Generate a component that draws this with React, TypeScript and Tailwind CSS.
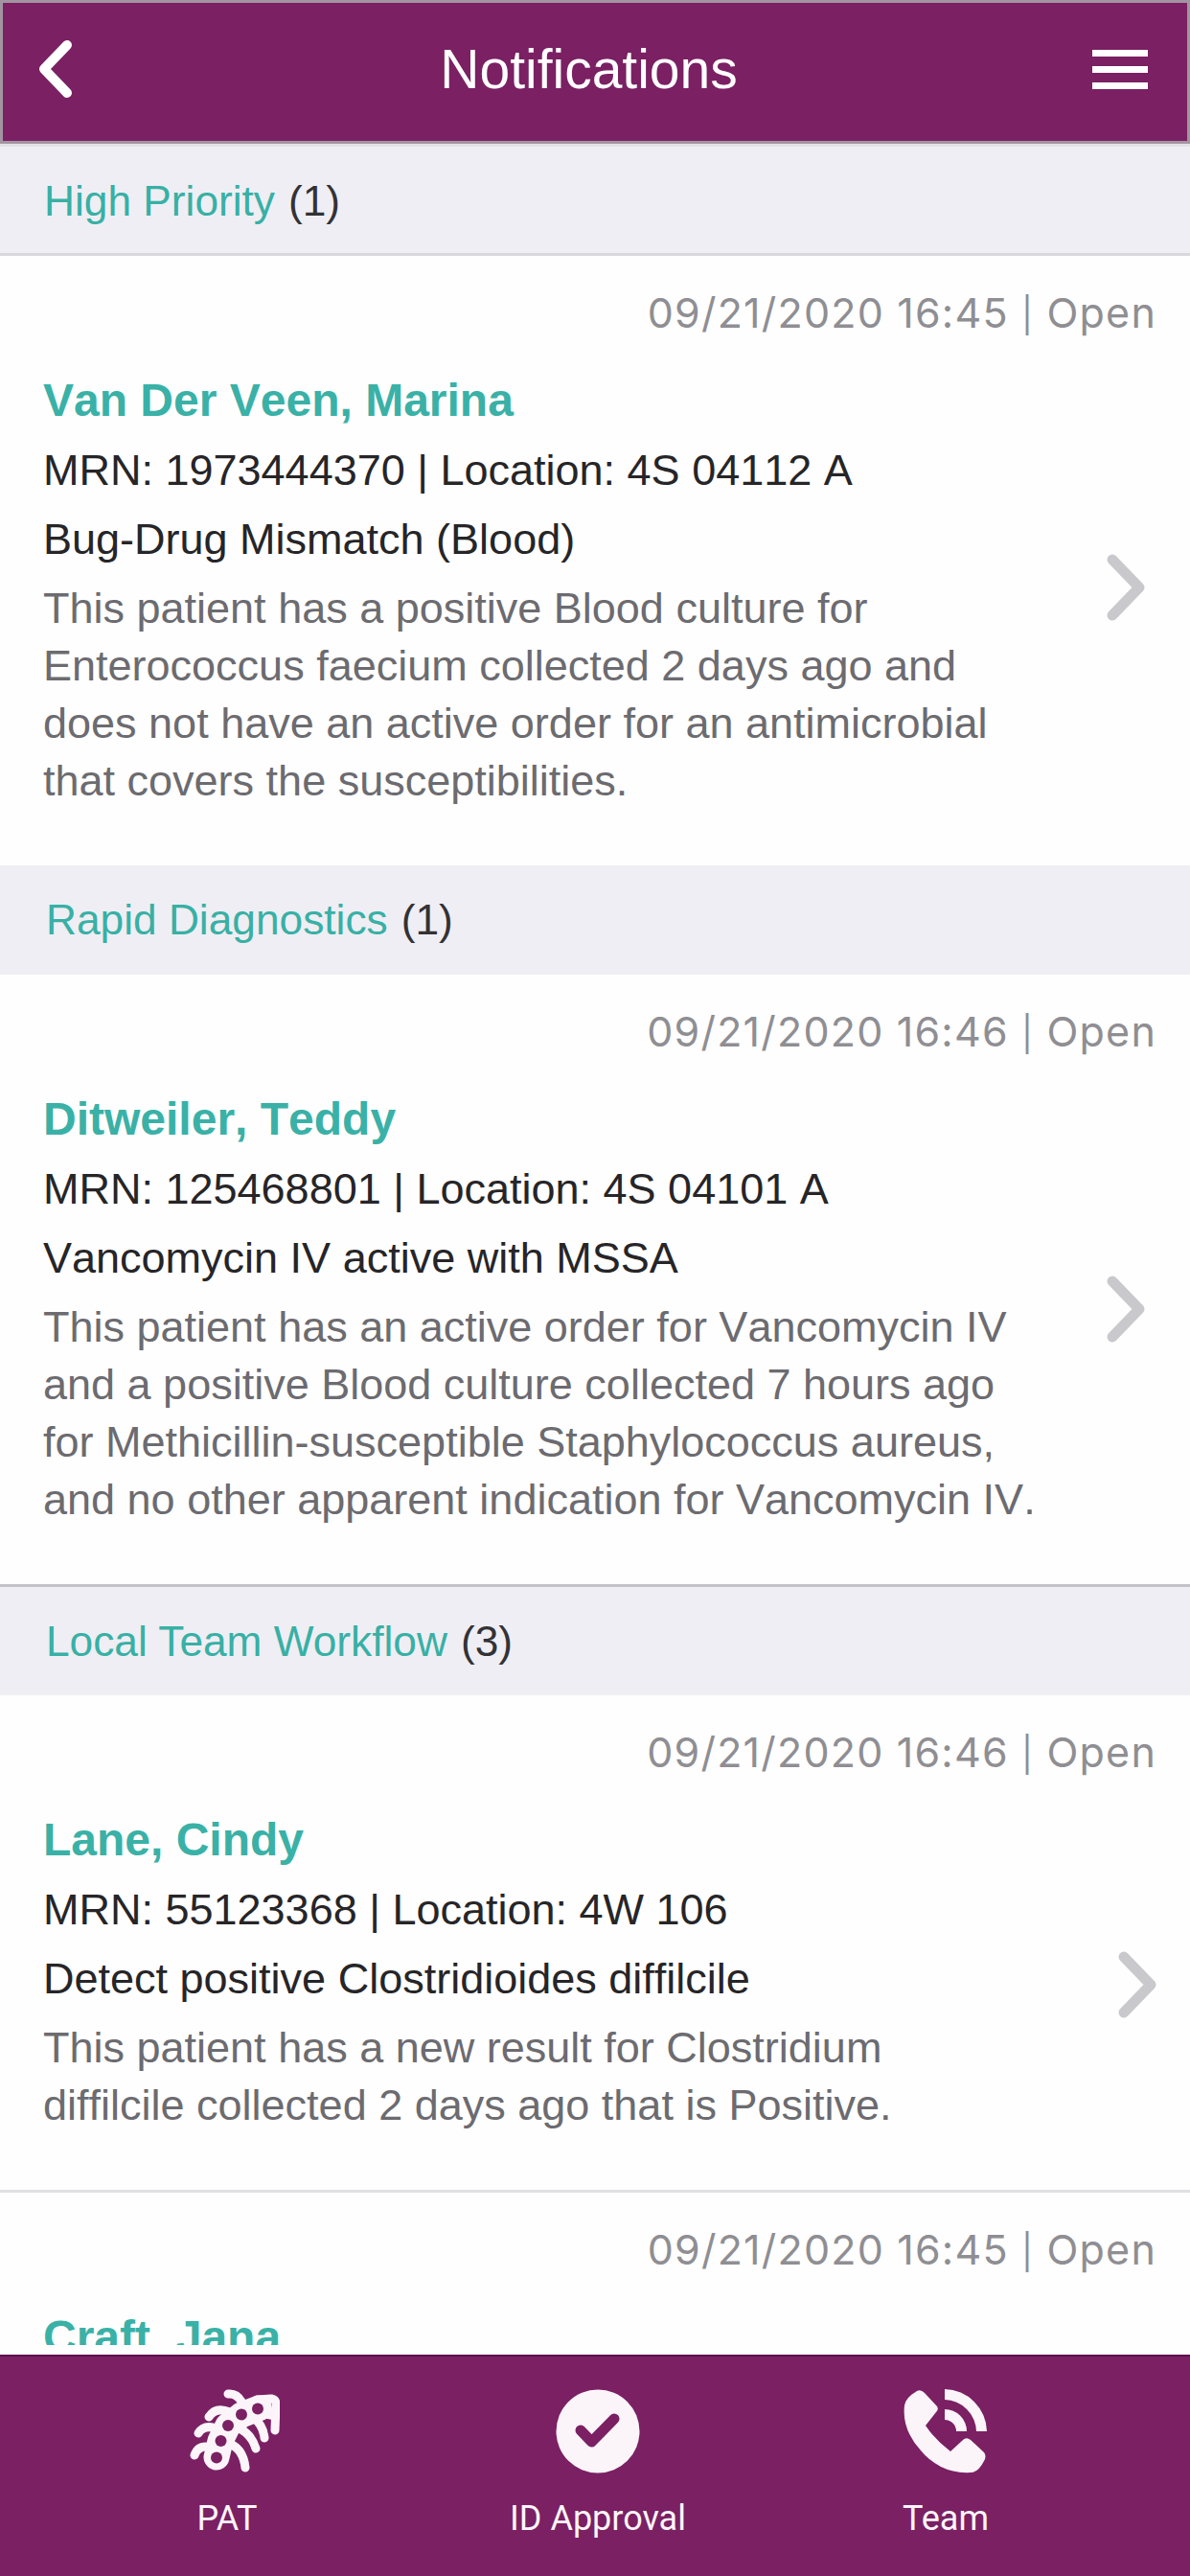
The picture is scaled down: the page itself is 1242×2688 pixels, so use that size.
import { type ReactNode } from 'react';
import clsx from 'clsx';

type Notification = {
  time: string;
  status: string;
  name: string;
  detail?: string;
  title?: string;
  lines?: string[];
  chevron?: string;
};

const marina: Notification = {
  time: '09/21/2020 16:45',
  status: 'Open',
  name: 'Van Der Veen, Marina',
  detail: 'MRN: 1973444370 | Location: 4S 04112 A',
  title: 'Bug-Drug Mismatch (Blood)',
  lines: [
    'This patient has a positive Blood culture for',
    'Enterococcus faecium collected 2 days ago and',
    'does not have an active order for an antimicrobial',
    'that covers the susceptibilities.',
  ],
  chevron: 'mr-[46px] mt-[189px]',
};

const teddy: Notification = {
  time: '09/21/2020 16:46',
  status: 'Open',
  name: 'Ditweiler, Teddy',
  detail: 'MRN: 125468801 | Location: 4S 04101 A',
  title: 'Vancomycin IV active with MSSA',
  lines: [
    'This patient has an active order for Vancomycin IV',
    'and a positive Blood culture collected 7 hours ago',
    'for Methicillin-susceptible Staphylococcus aureus,',
    'and no other apparent indication for Vancomycin IV.',
  ],
  chevron: 'mr-[46px] mt-[192px]',
};

const cindy: Notification = {
  time: '09/21/2020 16:46',
  status: 'Open',
  name: 'Lane, Cindy',
  detail: 'MRN: 55123368 | Location: 4W 106',
  title: 'Detect positive Clostridioides diffilcile',
  lines: [
    'This patient has a new result for Clostridium',
    'diffilcile collected 2 days ago that is Positive.',
  ],
  chevron: 'mr-[34px] mt-[145px]',
};

const jana: Notification = {
  time: '09/21/2020 16:45',
  status: 'Open',
  name: 'Craft, Jana',
};

function SectionHeader({ title, count, className }: { title: string; count: number; className?: string }) {
  return (
    <h2 className={clsx('flex shrink-0 items-center gap-[14px] bg-[#efeef4] text-[44.25px] leading-[52px] text-[#38b0a5]', className)}>
      <span>{title}</span>
      <span className="text-[#333236]">({count})</span>
    </h2>
  );
}

function NotificationCard({ item, className }: { item: Notification; className?: string }) {
  return (
    <article className={clsx('shrink-0 overflow-hidden bg-[#fefefe]', className)}>
      <p className="mt-[31px] h-[56px] pr-[35px] text-right font-[Inter,sans-serif] text-[43px] leading-[56px] tracking-[1.2px] text-[#8f8e93]">
        {item.time} <span className="text-[36px] leading-none">|</span> {item.status}
      </p>
      <div className="mt-[34px] flex justify-between pl-[45px]">
        <div className="whitespace-nowrap [font-kerning:none]">
          <h3 className="text-[48px] leading-[60px] font-bold text-[#3ab1a7]">{item.name}</h3>
          {item.detail ? <p className="mt-[7px] text-[45px] leading-[72px] text-[#262528]">{item.detail}</p> : null}
          {item.title ? <p className="text-[45px] leading-[72px] text-[#262528]">{item.title}</p> : null}
          {item.lines ? (
            <div className="mt-[6px] text-[45px] leading-[60px] text-[#6c6b70]">
              {item.lines.map((line) => <p key={line}>{line}</p>)}
            </div>
          ) : null}
        </div>
        {item.chevron ? (
          <svg className={clsx('h-[72px] w-[42px]', item.chevron)} viewBox="0 0 42 72" fill="none">
            <path d="M7 7 L35 36 L7 65" stroke="#c9c8cc" strokeWidth="11" strokeLinecap="round" strokeLinejoin="round" />
          </svg>
        ) : null}
      </div>
    </article>
  );
}

function TabItem({ label, className, children }: { label: string; className?: string; children: ReactNode }) {
  return (
    <button className={clsx('flex w-[300px] flex-col items-center', className)}>
      {children}
      <span className="mt-[25px] font-[Roboto,sans-serif] text-[36px] leading-[44px] whitespace-nowrap">{label}</span>
    </button>
  );
}

function PatIcon() {
  return (
    <svg className="ml-4 h-[88px] w-[94px]" viewBox="0 0 94 88" fill="none" stroke="currentColor" strokeLinecap="round">
      <path d="M28 71 L32 54 L40 38 L54 27 L72 20" strokeWidth="27" strokeLinejoin="round" />
      <path d="M70 11 L86 10 Q90 11 90 16 L89 43" strokeWidth="9" strokeLinejoin="round" />
      <path d="M82 12 L86 30 L76 28 Z" fill="currentColor" strokeWidth="4" />
      <path d="M66 29 Q77 38 78 51 M52 41 Q65 48 69 62 M42 57 Q56 63 58 82" strokeWidth="9" />
      <path d="M54 13 Q49 4 40 5 M42 24 Q27 18 20 29 M32 43 Q16 35 9 46 M24 61 Q9 57 5 69" strokeWidth="9" />
      <g fill="#7a2063" stroke="none">
        <circle cx="71" cy="20.5" r="6" />
        <circle cx="54" cy="26.5" r="6" />
        <circle cx="40" cy="38" r="6" />
        <circle cx="32.5" cy="54" r="6" />
        <circle cx="28" cy="71.5" r="6" />
      </g>
    </svg>
  );
}

function ApprovalIcon() {
  return (
    <svg className="size-[88px]" viewBox="0 0 88 88">
      <circle cx="44" cy="44" r="43.5" fill="currentColor" />
      <path d="M26 43 L37.5 55 L61 31" fill="none" stroke="#7a2063" strokeWidth="11" strokeLinecap="round" strokeLinejoin="round" />
    </svg>
  );
}

function CallIcon() {
  return (
    <svg className="size-[88px]" viewBox="0 0 88 88" fill="currentColor">
      <path d="M1 17 Q2 9 14 2 Q18 0 22 4 L35 18 Q37 21 34 24 L23 38 Q33 53 49 65 L61 54 Q65 49 70 53 L84 66 Q87 70 84 75 Q78 87 70 87 Q53 88 39 81 Q26 74 18 64 Q-2 42 1 17 Z" />
      <path d="M43 0 A45 45 0 0 1 87 44 L76 44 A34 34 0 0 0 43 11 Z" />
      <path d="M43 21 A23 23 0 0 1 66 44 L55 44 A12 12 0 0 0 43 32 Z" />
    </svg>
  );
}

export default function App() {
  return (
    <main className="flex h-[2688px] w-[1242px] flex-col overflow-hidden bg-[#fefefe] font-['Liberation_Sans',Arial,sans-serif]">
      <header className="flex h-[150px] shrink-0 items-center justify-between border-[3px] border-[#a394a1] bg-[#7a2063] pr-[41px] pb-[6px] pl-[36px] text-white">
        <svg className="h-[62px] w-[38px]" viewBox="0 0 38 62" fill="none">
          <path d="M31 6 L7 31 L31 56" stroke="currentColor" strokeWidth="10" strokeLinecap="round" strokeLinejoin="round" />
        </svg>
        <h1 className="ml-[12px] text-[57px] leading-[64px]">Notifications</h1>
        <div className="flex w-[58px] flex-col gap-[10px]">
          <span className="h-[7px] bg-white" />
          <span className="h-[7px] bg-white" />
          <span className="h-[7px] bg-white" />
        </div>
      </header>

      <SectionHeader title="High Priority" count={1} className="h-[117px] border-y-[3px] border-t-[#e3e2e6] border-b-[#d8d7dc] pt-[3px] pl-[46px]" />
      <NotificationCard item={marina} className="h-[636px]" />
      <SectionHeader title="Rapid Diagnostics" count={1} className="h-[114px] pl-[48px]" />
      <NotificationCard item={teddy} className="h-[636px]" />
      <SectionHeader title="Local Team Workflow" count={3} className="h-[116px] border-t-[3px] border-[#c3c2c7] pl-[48px]" />
      <NotificationCard item={cindy} className="h-[519px] border-b-[3px] border-[#e0e0e3]" />
      <NotificationCard item={jana} className="h-[159px]" />

      <nav className="mt-auto flex h-[231px] shrink-0 border-t-2 border-[#5f104d] bg-[#7a2063] pt-[34px] text-[#fbf5fa]">
        <TabItem label="PAT" className="ml-[87px]">
          <PatIcon />
        </TabItem>
        <TabItem label="ID Approval" className="ml-[87px]">
          <ApprovalIcon />
        </TabItem>
        <TabItem label="Team" className="ml-[63px]">
          <CallIcon />
        </TabItem>
      </nav>
    </main>
  );
}
